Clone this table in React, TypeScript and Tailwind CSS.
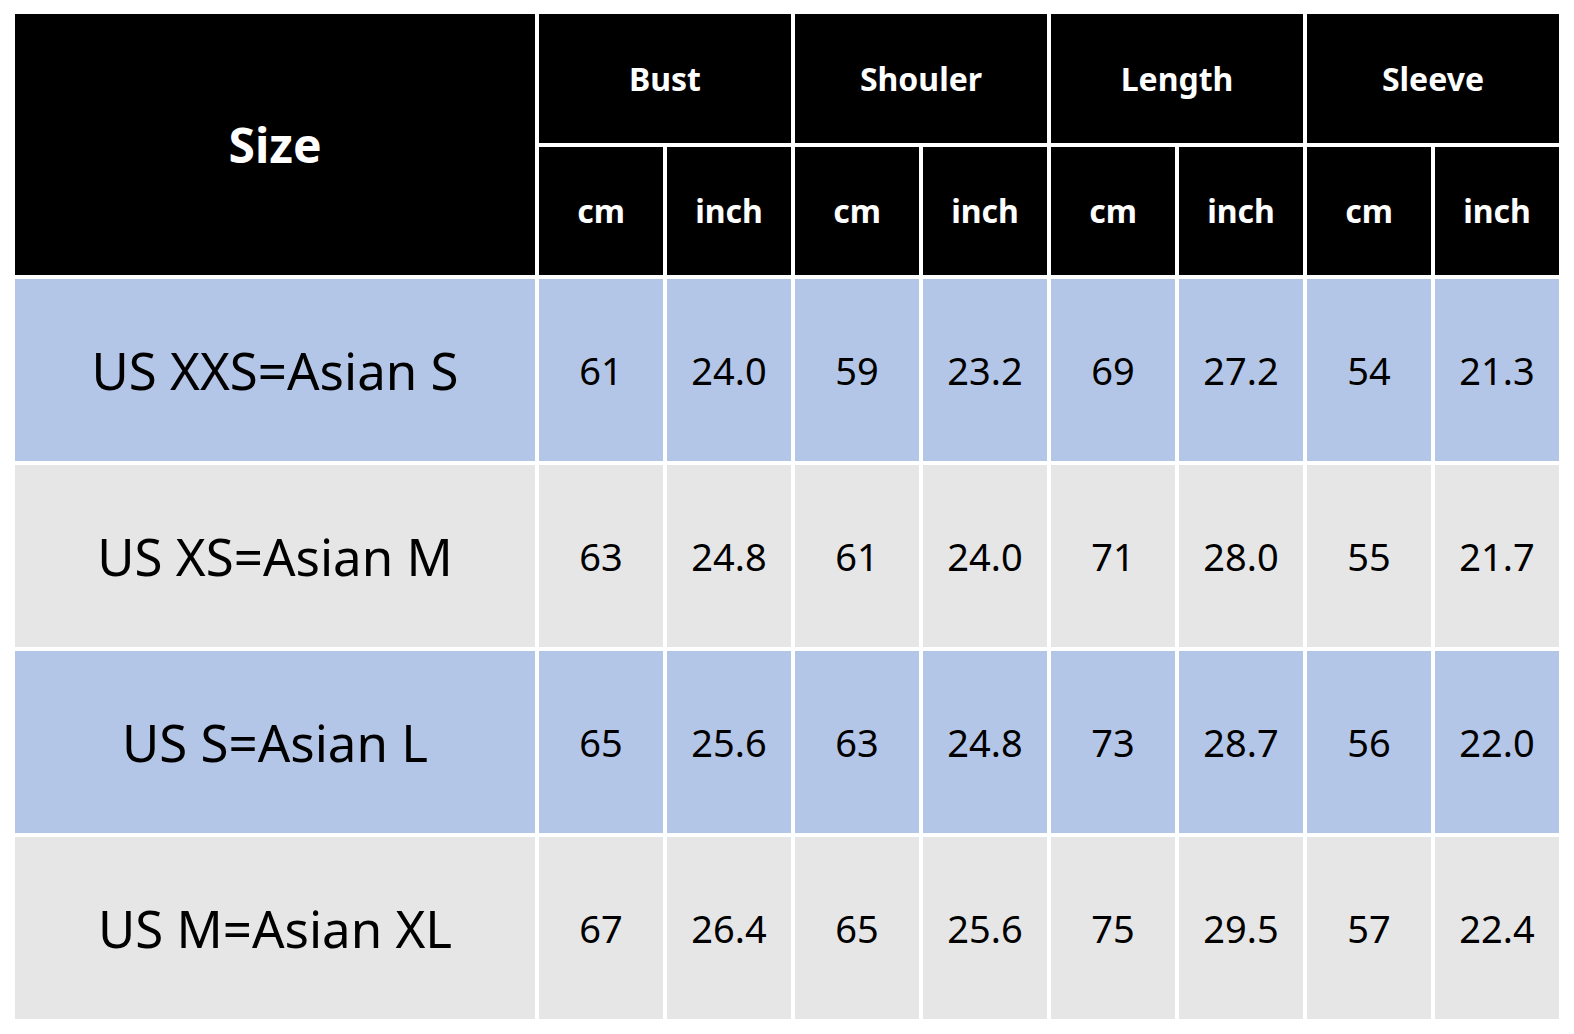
import React from 'react';

const groups = ['Bust', 'Shouler', 'Length', 'Sleeve'];

const rows = [
  { size: 'US XXS=Asian S', vals: ['61', '24.0', '59', '23.2', '69', '27.2', '54', '21.3'], bg: 'bg-[#b4c6e7]' },
  { size: 'US XS=Asian M', vals: ['63', '24.8', '61', '24.0', '71', '28.0', '55', '21.7'], bg: 'bg-[#e6e6e6]' },
  { size: 'US S=Asian L', vals: ['65', '25.6', '63', '24.8', '73', '28.7', '56', '22.0'], bg: 'bg-[#b4c6e7]' },
  { size: 'US M=Asian XL', vals: ['67', '26.4', '65', '25.6', '75', '29.5', '57', '22.4'], bg: 'bg-[#e6e6e6]' },
];

const App: React.FC = () => {
  return (
    <div className="w-[1574px] h-[1034px] bg-white pt-[14px] pl-[15px] font-['Noto_Sans',sans-serif]">
      <div className="grid grid-cols-[520px_repeat(8,124px)] grid-rows-[129px_128px_repeat(4,182px)] gap-[4px]">
        {/* header */}
        <div className="row-span-2 bg-black text-white font-bold text-[48px] flex items-center justify-center">
          Size
        </div>
        {groups.map((g) => (
          <div key={g} className="col-span-2 bg-black text-white font-bold text-[32px] flex items-center justify-center">
            {g}
          </div>
        ))}
        {groups.map((g) => (
          <React.Fragment key={g + '-sub'}>
            <div className="bg-black text-white font-bold text-[32px] flex items-center justify-center">cm</div>
            <div className="bg-black text-white font-bold text-[32px] flex items-center justify-center">inch</div>
          </React.Fragment>
        ))}

        {/* body */}
        {rows.map((r) => (
          <React.Fragment key={r.size}>
            <div className={`${r.bg} text-black text-[51px] flex items-center justify-center`}>{r.size}</div>
            {r.vals.map((v, i) => (
              <div key={i} className={`${r.bg} text-black text-[38px] flex items-center justify-center`}>
                {v}
              </div>
            ))}
          </React.Fragment>
        ))}
      </div>
    </div>
  );
};

export default App;
